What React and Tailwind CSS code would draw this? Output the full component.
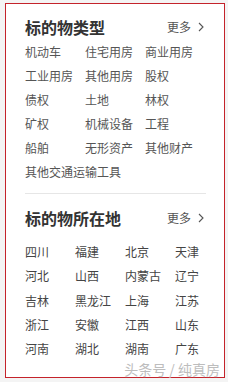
import React from 'react';

const types = [
  '机动车', '住宅用房', '商业用房',
  '工业用房', '其他用房', '股权',
  '债权', '土地', '林权',
  '矿权', '机械设备', '工程',
  '船舶', '无形资产', '其他财产',
];

const places = [
  '四川', '福建', '北京', '天津',
  '河北', '山西', '内蒙古', '辽宁',
  '吉林', '黑龙江', '上海', '江苏',
  '浙江', '安徽', '江西', '山东',
  '河南', '湖北', '湖南', '广东',
];

const SectionTitle = ({ title }) => (
  <div className="flex items-center justify-between h-[24px]">
    <span className="text-[16px] leading-[24px] font-bold text-[#333]">{title}</span>
    <span className="flex items-center text-[12px] leading-[24px] text-[#555] pr-[1px]">
      更多
      <svg width="8" height="10" viewBox="0 0 8 10" className="ml-[6px]">
        <polyline points="2,1 6,5 2,9" fill="none" stroke="#555" strokeWidth="1.1" />
      </svg>
    </span>
  </div>
);

const App = () => {
  return (
    <div
      className="w-[228px] h-[382px] bg-[#f4f4f4] pt-[3px] pl-[5px]"
      style={{ fontFamily: '"Noto Sans CJK SC", "Noto Sans", sans-serif' }}
    >
      <div className="relative w-[220px] h-[375px] border border-[#c4232b] bg-white pt-[11px] pl-[19px] pr-[18px]">
        <SectionTitle title="标的物类型" />
        <div className="grid grid-cols-[60px_60px_60px] mt-[1px]">
          {types.map((t) => (
            <div key={t} className="h-[24px] leading-[24px] text-[12px] text-[#555]">{t}</div>
          ))}
          <div className="col-span-3 h-[24px] leading-[24px] text-[12px] text-[#555]">其他交通运输工具</div>
        </div>

        <div className="mt-[9px] border-t border-[#e6e6e6]" />

        <div className="mt-[12px]">
          <SectionTitle title="标的物所在地" />
        </div>
        <div className="grid grid-cols-[50px_50px_50px_50px] mt-[10px]">
          {places.map((p) => (
            <div key={p} className="h-[24.3px] leading-[24px] text-[12px] text-[#444]">{p}</div>
          ))}
        </div>

        <div
          className="absolute right-[4px] bottom-[1px] text-[14px] leading-[14px] text-[#bdbdbd]"
          style={{ textShadow: '0 0 1px #fff' }}
        >
          头条号 / 纯真房
        </div>
      </div>
    </div>
  );
};

export default App;
